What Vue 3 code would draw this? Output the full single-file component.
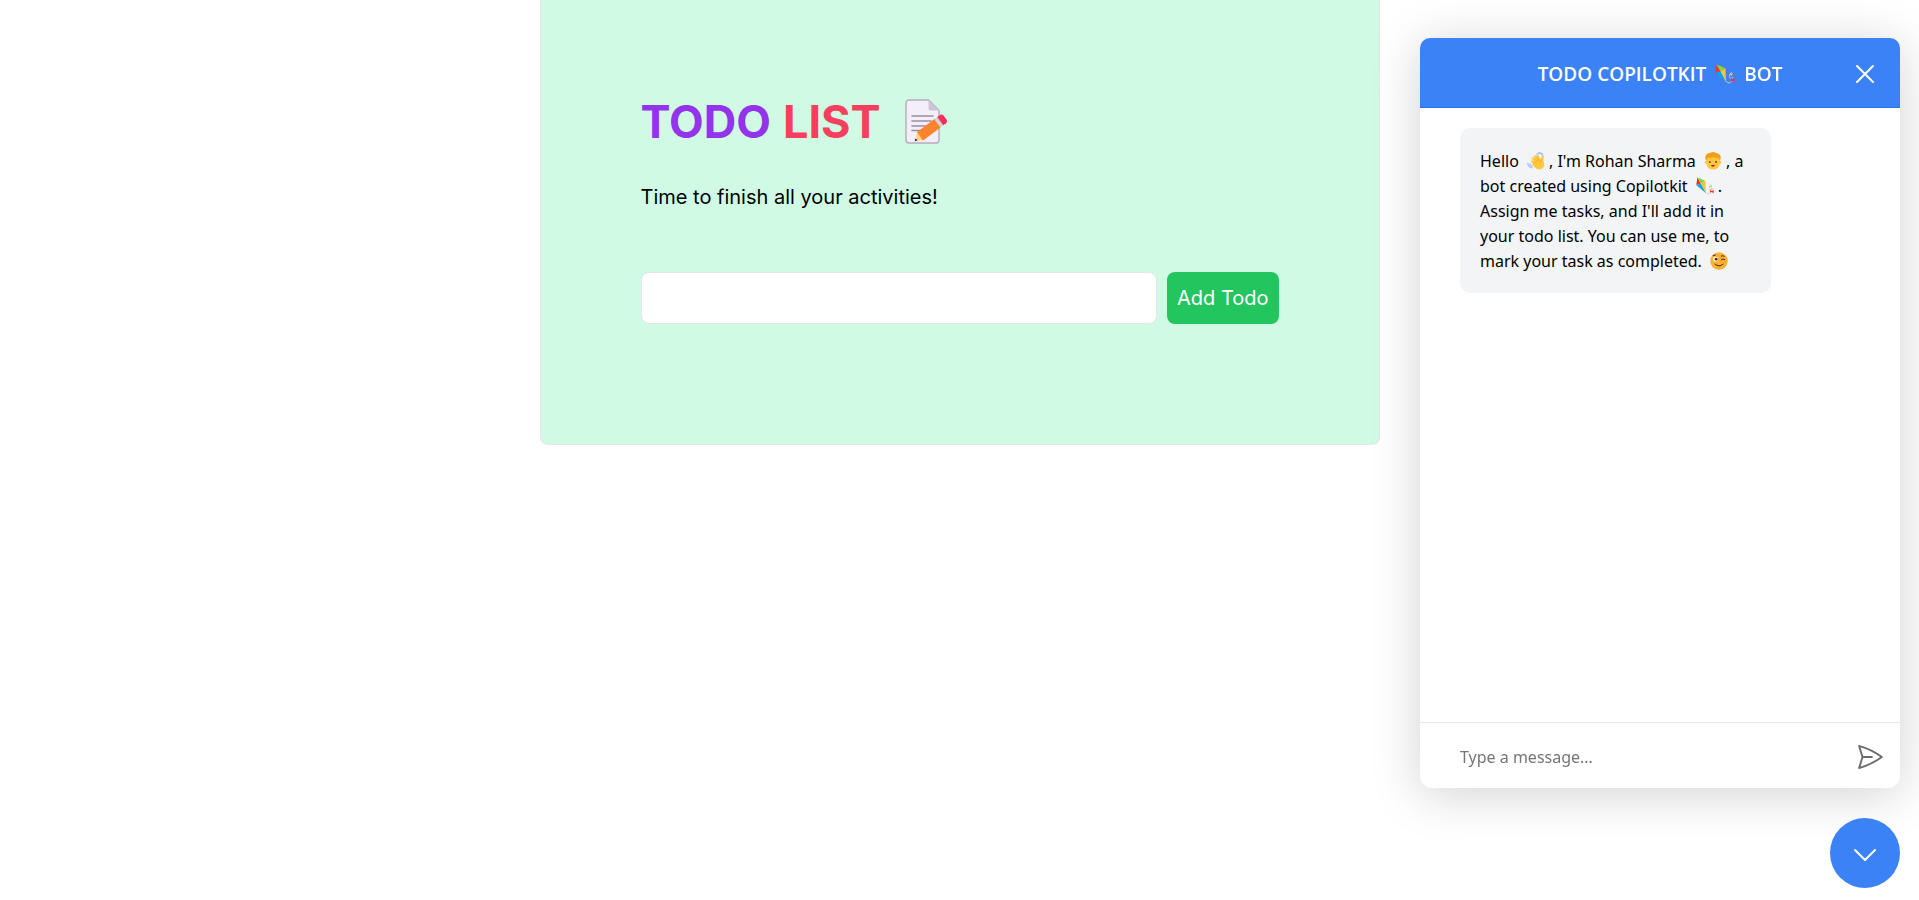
<script setup>
import { ref } from 'vue'

const todo = ref('')
const message = ref('')
</script>

<template>
  <svg class="sprite" aria-hidden="true">
    <symbol id="kite" viewBox="0 0 20 20">
      <path d="M11 17c2 3 5.500 2 5.500-.5c0-1.500-2-2-2-4s.5-3 2.500-4.500" fill="none" stroke="#cdcad6" stroke-width="1" />
      <path d="M1.500.5 5.500 7.300.3 9Z" fill="#f8312f" />
      <path d="M1.500.5 10.500 4.200 5.500 7.300Z" fill="#86d72f" />
      <path d="M.3 9 5.500 7.300 11 18Z" fill="#00a6ed" />
      <path d="M10.500 4.200 5.500 7.300 11 18Z" fill="#f9c23c" />
      <path d="M14.500 10.500 17.800 9 17 12Z" fill="#f9c23c" />
      <path d="M15.500 13.500 18.500 12.500 18 14.500Z" fill="#6fb6f0" />
      <path d="M15.500 14.500 17.500 15.500 19.700 14.500 19.700 18 17.500 16.800 15.500 17.500Z" fill="#f8312f" />
    </symbol>
  </svg>

  <main class="card">
    <h1>
      <span class="purple">TODO</span> <span class="rose">LIST</span>
      <svg class="memo" viewBox="0 0 44 46" role="img" aria-label="Memo">
        <path d="M4 1h19.500L34 11.500V41a3 3 0 0 1-3 3H4a3 3 0 0 1-3-3V4a3 3 0 0 1 3-3Z" fill="#f3eef8" stroke="#b4acbc" stroke-width="1.400" />
        <path d="M23.500 1 34 11.500h-8.500a2 2 0 0 1-2-2Z" fill="#cdc4d6" />
        <path d="M7 17h21M7 22h19M7 27h14M7 31.500h8" stroke="#998ea4" stroke-width="1.600" stroke-linecap="round" />
        <path d="M10 42 12.300 32.500 18.500 41Z" fill="#fcd482" />
        <path d="M9.800 42.300 10.400 39.600 12.600 41.300Z" fill="#1c1c1c" />
        <path d="M12 33 29.500 20l6 8.500-17.500 13Z" fill="#ff822d" />
        <path d="m29.500 20 3.200-2.300 6 8.300-3.200 2.500Z" fill="#d3d3d3" />
        <path d="m32.300 18 2.600-2q2-1.300 3.600.6l3.200 4.200q1.200 2.200-.6 3.500L38.200 26.200Z" fill="#f92f60" />
      </svg>
    </h1>
    <p class="lead">Time to finish all your activities!</p>
    <form class="todo-form" @submit.prevent>
      <input v-model="todo" type="text" aria-label="New todo" />
      <button type="submit">Add Todo</button>
    </form>
  </main>

  <aside class="widget">
    <section class="chat" aria-label="Chat">
      <header>
        <h2>TODO COPILOTKIT <svg class="emoji title-emoji" role="img" aria-label="Kite"><use href="#kite" /></svg> BOT</h2>
        <button class="close" type="button" aria-label="Close">
          <svg viewBox="0 0 24 24" width="24" height="24"><path d="M4 4 20 20M20 4 4 20" /></svg>
        </button>
      </header>
      <div class="messages">
        <p class="bubble">
          Hello
          <svg class="emoji" viewBox="0 0 20 20" role="img" aria-label="Waving hand">
            <path d="M11 2.500q3-2.500 5 0M13 .8q3.500-.3 4.500 3M1 12.500q0 4.500 4.500 5M3.200 13q0 2.500 2.500 2.800" fill="none" stroke="#a6c5f7" stroke-width="1.400" stroke-linecap="round" />
            <path d="m12 14-6.300-3.500M12 12 6.500 7M13 11 9 5M14 11l-2.200-6.500M16 12l1.500-6.500M12 16l-5-3" fill="none" stroke="#ffc83d" stroke-width="2.600" stroke-linecap="round" />
            <path d="M9 9q4-3 8-1.500 2.500 2.500 2 7-.5 4.500-4.500 5-4 .3-8-5Z" fill="#ffc83d" />
            <path d="m8 10.500 2.500 2M9.500 8l2.500 2.500M11.800 7l1.700 2.500M17 8.500q-2.500.5-2.500 3.500" fill="none" stroke="#e8951f" stroke-width=".6" />
          </svg>, I'm Rohan Sharma
          <svg class="emoji" viewBox="0 0 20 20" role="img" aria-label="Boy">
            <circle cx="2.500" cy="11.500" r="1.700" fill="#ffc83d" />
            <circle cx="17.500" cy="11.500" r="1.700" fill="#ffc83d" />
            <path d="M2.500 5h15v7.500q-1 7-7.500 7t-7.500-7Z" fill="#ffc83d" />
            <path d="M2.500 9.500Q.5 6.500 2 4 3 1 7 .7q3-1.200 6 0 4 .5 5 3.300 1.500 2.500-.5 5.500-1-1.500-1-3-3 .3-5.500-.7-3.500 1-7 .5Q4 8 2.500 9.500Z" fill="#f59f16" />
            <circle cx="6.500" cy="11" r="1.100" fill="#7d4533" />
            <circle cx="13.500" cy="11" r="1.100" fill="#7d4533" />
            <path d="M7.500 14.500h5q-2.500 3.500-5 0Z" fill="#bb1d37" />
          </svg>, a bot created using Copilotkit
          <svg class="emoji" role="img" aria-label="Kite"><use href="#kite" /></svg>.
          Assign me tasks, and I'll add it in your todo list. You can use me, to mark your task as completed.
          <svg class="emoji" viewBox="0 0 20 20" role="img" aria-label="Winking face">
            <circle cx="10" cy="10" r="9.700" fill="#ffb02e" />
            <circle cx="6" cy="8" r="2.600" fill="#fff" />
            <circle cx="6.800" cy="8" r="1.500" fill="#402a32" />
            <path d="M3.500 4 6 3.300M12.500 4.500q2-1.500 3.500.5M12.500 8.500q2-1.700 4 0M5.500 13.500q4.500 4 9 0" fill="none" stroke="#402a32" stroke-width="1.100" stroke-linecap="round" />
          </svg>
        </p>
      </div>
      <form class="composer" @submit.prevent>
        <input v-model="message" type="text" placeholder="Type a message..." aria-label="Message" />
        <button type="submit" aria-label="Send">
          <svg viewBox="0 0 24 24" width="30" height="30"><path d="M6 12 3.270 3.130A59.800 59.800 0 0 1 21.490 12a59.800 59.800 0 0 1-18.220 8.880L6 12Zm0 0h7.500" /></svg>
        </button>
      </form>
    </section>
    <button class="toggle" type="button" aria-label="Toggle chat">
      <svg viewBox="0 0 24 24" width="24" height="24"><path d="m2 9 10 10L22 9" /></svg>
    </button>
  </aside>
</template>

<style>
body {
  margin: 0;
  background: #fff;
}
</style>

<style scoped>
* {
  box-sizing: border-box;
}
button,
input {
  font: inherit;
  border: 0;
  outline: 0;
}
button {
  cursor: pointer;
}
.sprite {
  position: absolute;
  width: 0;
  height: 0;
}
.card {
  max-width: 840px;
  margin: 0 auto;
  padding: 98px 100px 120px;
  background: #d0fae4;
  border: 1px solid #e5e7eb;
  border-top: 0;
  border-radius: 0 0 8px 8px;
  font-family: Inter, "Liberation Sans", sans-serif;
  color: #000;
}
h1 {
  display: flex;
  align-items: center;
  gap: 12px;
  margin: 0 0 37px;
  font-size: 45px;
  line-height: 48px;
  font-weight: 700;
}
.purple {
  color: #9333ea;
}
.rose {
  color: #f43f5e;
}
.memo {
  width: 44px;
  height: 46px;
  margin-left: 12px;
}
.lead {
  margin: 0 0 61px;
  font-size: 20px;
  line-height: 28px;
}
.todo-form {
  display: flex;
  gap: 10px;
}
.todo-form input {
  flex: 1;
  min-width: 0;
  height: 52px;
  padding: 0 12px;
  background: #fff;
  border: 1px solid #e5e7eb;
  border-radius: 8px;
  font-size: 20px;
}
.todo-form button {
  padding: 0 10px;
  background: #22c55e;
  color: #fff;
  border-radius: 8px;
  font-size: 20px;
}
.widget {
  position: fixed;
  top: 38px;
  right: 19px;
  bottom: 12px;
  width: 480px;
  max-width: 100%;
  display: flex;
  flex-direction: column;
  gap: 30px;
  font-family: "Noto Sans", "Open Sans", sans-serif;
}
.chat {
  flex: 1;
  min-height: 0;
  display: flex;
  flex-direction: column;
  background: #fff;
  border-radius: 12px;
  box-shadow: 0 6px 50px rgba(0, 0, 0, 0.18);
}
header {
  position: relative;
  display: flex;
  align-items: center;
  justify-content: center;
  height: 70px;
  padding-top: 2px;
  background: #3b82f6;
  border-bottom: 1px solid #2f74e6;
  border-radius: 10px 10px 0 0;
  color: #fff;
}
h2 {
  margin: 0;
  font-family: "Open Sans", "Noto Sans", sans-serif;
  font-size: 19px;
  line-height: 28px;
  font-weight: 600;
}
.emoji {
  width: 18px;
  height: 18px;
  margin: 0 4px;
  vertical-align: -3px;
}
.title-emoji {
  width: 20px;
  height: 20px;
}
.close {
  position: absolute;
  right: 23px;
  padding: 0;
  width: 24px;
  height: 24px;
  background: none;
}
.close svg,
.toggle svg {
  display: block;
}
.close path,
.toggle path {
  fill: none;
  stroke: #fff;
  stroke-width: 2;
  stroke-linecap: round;
  stroke-linejoin: round;
}
.messages {
  flex: 1;
  padding: 20px 40px;
}
.bubble {
  max-width: 311px;
  margin: 0;
  padding: 21px 20px 19px;
  background: #f3f4f6;
  border-radius: 10px;
  font-size: 16px;
  line-height: 25px;
  color: #000;
}
.composer {
  display: flex;
  align-items: center;
  height: 66px;
  padding: 2px 15px 0 40px;
  border-top: 1px solid #e5e7eb;
}
.composer input {
  flex: 1;
  min-width: 0;
  padding: 0;
  background: none;
  font-size: 16px;
  line-height: 28px;
}
.composer input::placeholder {
  color: #757575;
  opacity: 1;
}
.composer button {
  display: flex;
  padding: 0;
  background: none;
}
.composer path {
  fill: none;
  stroke: #6b6b6b;
  stroke-width: 1.500;
  stroke-linecap: round;
  stroke-linejoin: round;
}
.toggle {
  align-self: flex-end;
  display: flex;
  align-items: center;
  justify-content: center;
  width: 70px;
  height: 70px;
  padding: 0;
  background: #3b82f6;
  border-radius: 50%;
}
</style>
